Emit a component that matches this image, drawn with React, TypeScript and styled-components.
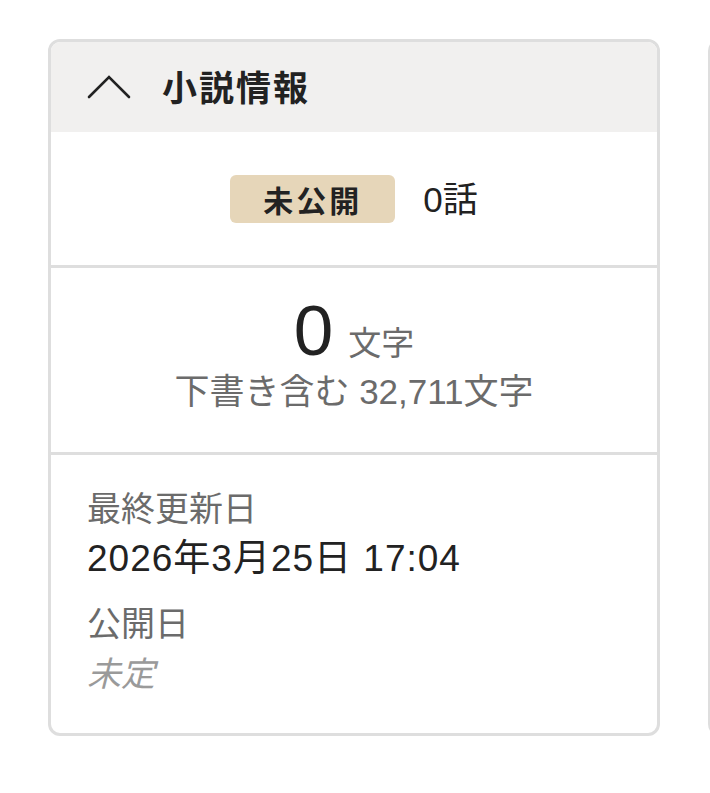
import React from 'react';
import styled, { createGlobalStyle } from 'styled-components';

const GlobalStyle = createGlobalStyle`
	html, body {
		margin: 0;
		padding: 0;
		background: #ffffff;
		overflow: hidden;
	}
	body {
		font-family: 'Liberation Sans', 'Noto Sans CJK JP', sans-serif;
		color: #222222;
	}
`;

const Page = styled.div`
	display: flex;
	gap: 48px;
	padding: 39px 0 0 48px;
	width: 710px;
	height: 793px;
	box-sizing: border-box;
	overflow: hidden;
`;

const Card = styled.div`
	flex: 0 0 612px;
	height: 697px;
	box-sizing: border-box;
	border: 3px solid #dedede;
	border-radius: 12px;
	overflow: hidden;
	display: flex;
	flex-direction: column;
	background: #ffffff;
`;

const Header = styled.div`
	display: flex;
	align-items: center;
	gap: 31px;
	height: 90px;
	padding-left: 36px;
	background: #f1f0ef;
`;

const Title = styled.div`
	font-family: 'Noto Sans CJK JP', sans-serif;
	font-size: 35px;
	font-weight: 700;
	letter-spacing: 2px;
	color: #222222;
	line-height: 1;
	margin-top: -3px;
`;

const Section = styled.div<{ height: string; last?: boolean }>`
	height: ${({ height }) => height};
	box-sizing: border-box;
	border-bottom: ${({ last }) => (last ? 'none' : '3px solid #dedede')};
	display: flex;
	flex-direction: column;
`;

const StatusRow = styled.div`
	flex: 1;
	display: flex;
	align-items: center;
	justify-content: center;
	gap: 28px;
`;

const Badge = styled.span`
	display: inline-flex;
	align-items: center;
	justify-content: center;
	width: 165px;
	height: 48px;
	border-radius: 6px;
	background: #e6d6b9;
	font-family: 'Noto Sans CJK JP', sans-serif;
	font-size: 30px;
	font-weight: 700;
	letter-spacing: 3px;
	color: #222222;
`;

const Episodes = styled.span`
	font-size: 35px;
	color: #222222;
	margin-top: -4px;
`;

const Counts = styled.div`
	padding-top: 30px;
`;

const CountRow = styled.div`
	display: flex;
	align-items: baseline;
	justify-content: center;
	gap: 15px;
	height: 66px;
`;

const BigNumber = styled.span`
	font-size: 71px;
	line-height: 66px;
	color: #222222;
`;

const Unit = styled.span`
	font-size: 33px;
	line-height: 1;
	color: #6b6b6b;
`;

const SubCount = styled.div`
	text-align: center;
	font-size: 35px;
	line-height: 40px;
	color: #6b6b6b;
	margin-top: 8px;
`;

const Dates = styled.div`
	padding: 29px 36px 0;
	display: flex;
	flex-direction: column;
	gap: 15px;
`;

const DateItem = styled.div`
	display: flex;
	flex-direction: column;
`;

const Label = styled.div`
	font-size: 34px;
	line-height: 50px;
	color: #6b6b6b;
`;

const Value = styled.div<{ muted?: boolean }>`
	font-size: ${({ muted }) => (muted ? '34px' : '37px')};
	line-height: 50px;
	letter-spacing: ${({ muted }) => (muted ? '0' : '1px')};
	color: ${({ muted }) => (muted ? '#9a9a9a' : '#222222')};
	font-style: ${({ muted }) => (muted ? 'italic' : 'normal')};
`;

function Chevron() {
	return (
		<svg width="44" height="24" viewBox="0 0 44 24" fill="none">
			<polyline points="2,22 22,2 42,22" stroke="#222" strokeWidth="2.6" strokeLinecap="round" />
		</svg>
	);
}

export default function App() {
	return (
		<>
			<GlobalStyle />
			<Page>
				<Card>
					<Header>
						<Chevron />
						<Title>小説情報</Title>
					</Header>
					<Section height="136px">
						<StatusRow>
							<Badge>未公開</Badge>
							<Episodes>0話</Episodes>
						</StatusRow>
					</Section>
					<Section height="187px">
						<Counts>
							<CountRow>
								<BigNumber>0</BigNumber>
								<Unit>文字</Unit>
							</CountRow>
							<SubCount>下書き含む 32,711文字</SubCount>
						</Counts>
					</Section>
					<Section height="auto" last>
						<Dates>
							<DateItem>
								<Label>最終更新日</Label>
								<Value>2026年3月25日 17:04</Value>
							</DateItem>
							<DateItem>
								<Label>公開日</Label>
								<Value muted>未定</Value>
							</DateItem>
						</Dates>
					</Section>
				</Card>
				<Card />
			</Page>
		</>
	);
}
